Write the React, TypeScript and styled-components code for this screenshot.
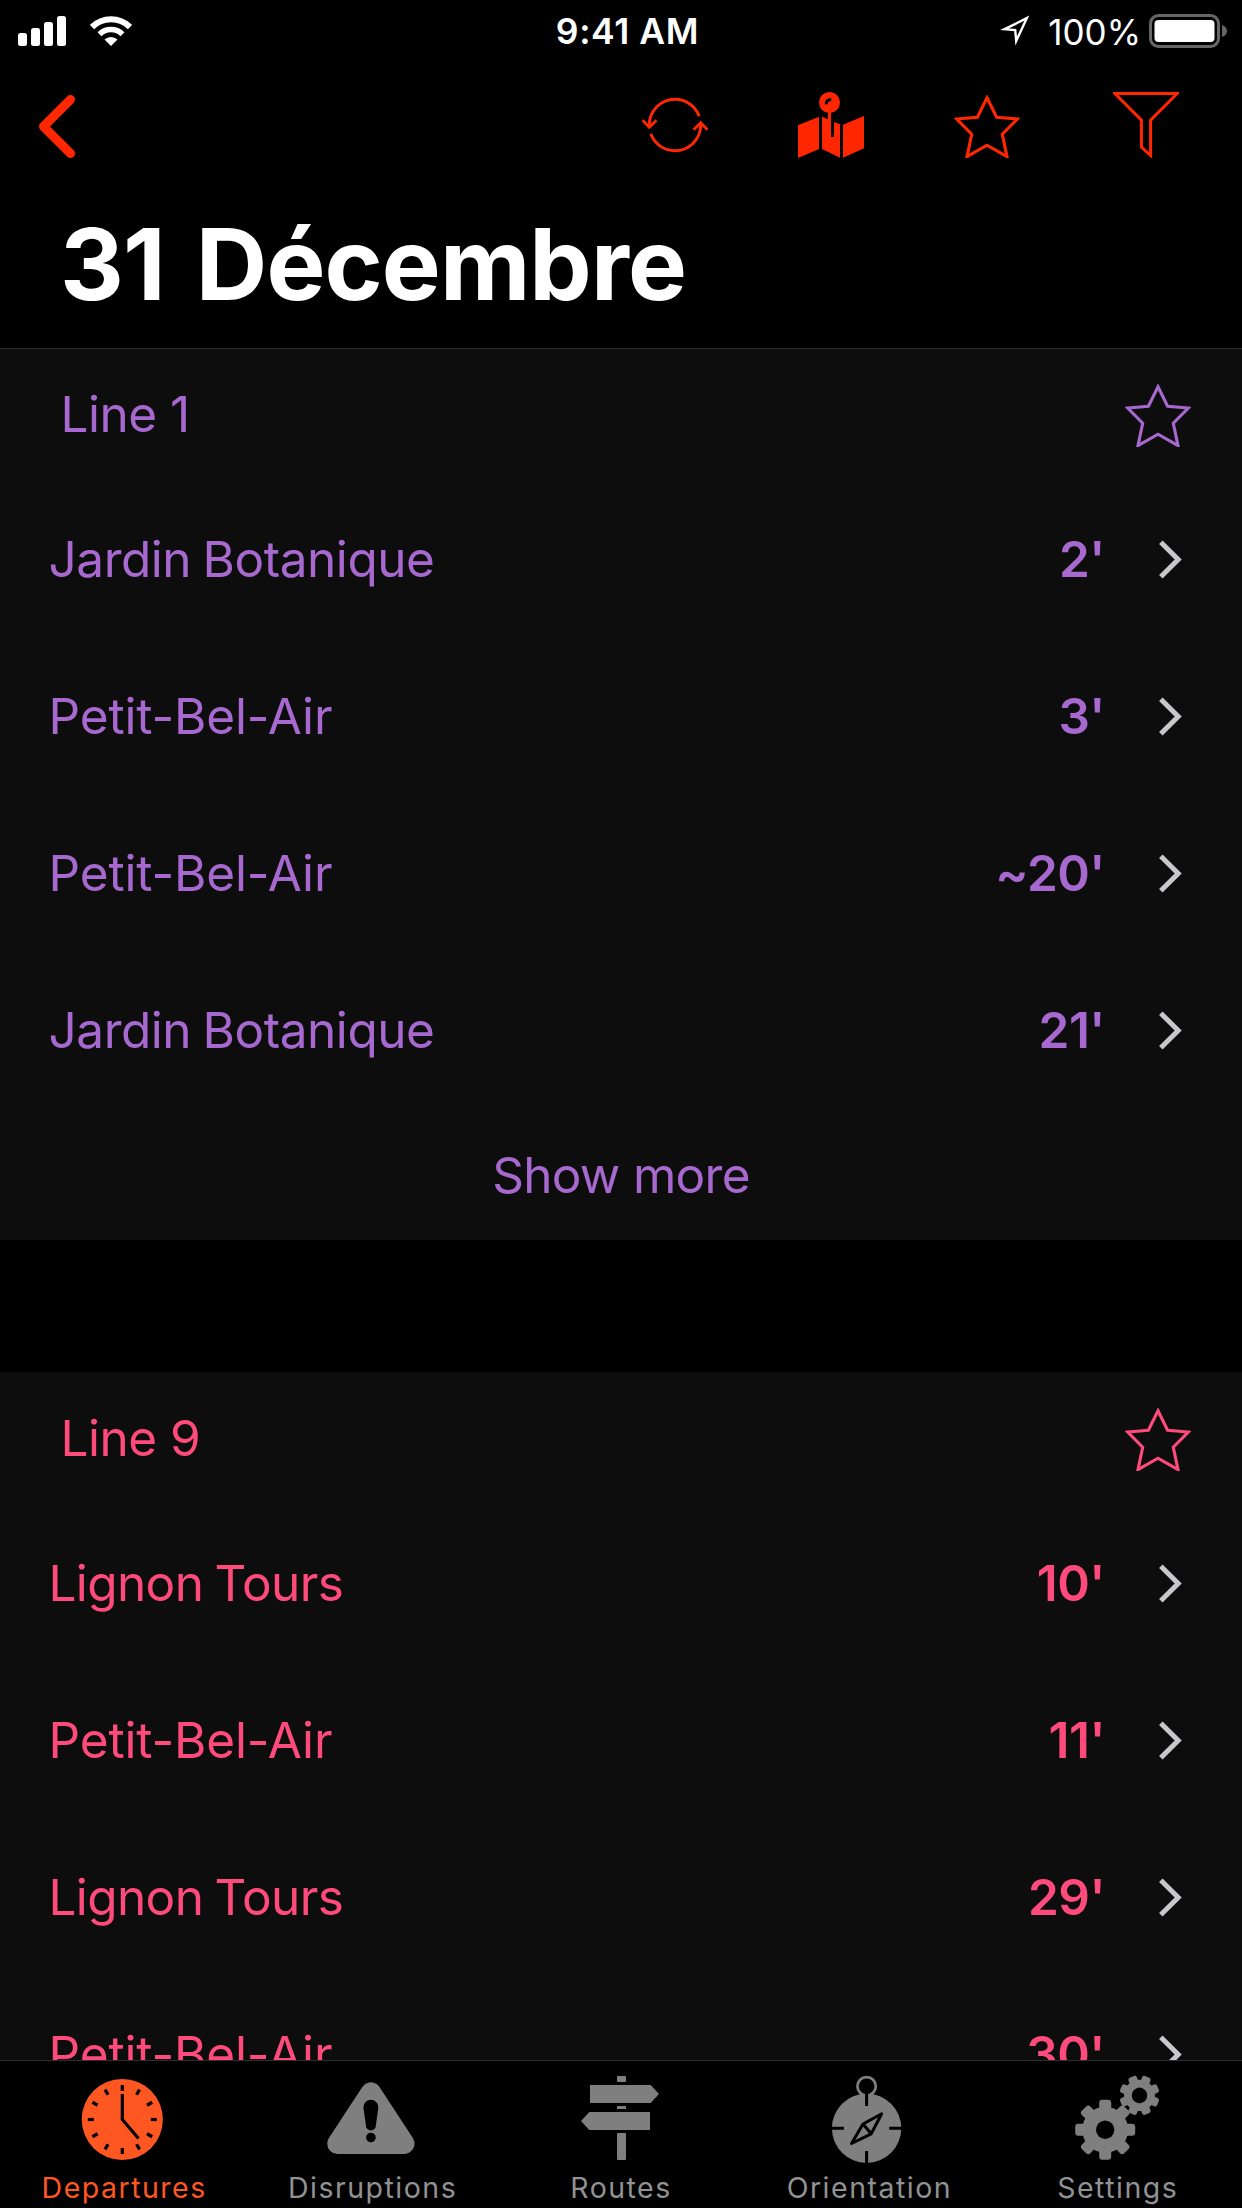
import React from "react";
import styled, { createGlobalStyle } from "styled-components";

const PURPLE = "#a769cf";
const PINK = "#ff4a7c";
const RED = "#ff2600";
const ORANGE = "#ff5722";

const GlobalStyle = createGlobalStyle`
  body { margin: 0; background: #000; }
  * { box-sizing: border-box; }
  svg { display: block; flex: none; }
`;

const Screen = styled.div`
  width: 1242px;
  height: 2208px;
  display: flex;
  flex-direction: column;
  overflow: hidden;
  background: #000;
  color: #fff;
  font-family: Inter, "Liberation Sans", sans-serif;
  white-space: nowrap;
`;

const Header = styled.header`
  position: relative;
  flex: none;
  height: 348px;
  background: #000;
  box-shadow: 0 1px 0 #2e2e2e;
`;

const StatusBar = styled.div`
  height: 60px;
  display: grid;
  grid-template-columns: 1fr auto 1fr;
  align-items: center;
  padding: 0 14px 0 18px;
`;

const StatusGroup = styled.div<{ $end?: boolean }>`
  display: flex;
  align-items: center;
  justify-content: ${(p) => (p.$end ? "flex-end" : "flex-start")};
  gap: ${(p) => (p.$end ? "0" : "24px")};
`;

const Clock = styled.div`
  font-size: 35.5px;
  font-weight: 600;
  line-height: 60px;
  letter-spacing: 0.6px;
  padding: 2px 0 0 9px;
`;

const Battery = styled.span`
  font-size: 35px;
  line-height: 60px;
  padding-top: 1px;
  margin: 0 8px 0 18px;
`;

const NavBar = styled.nav`
  height: 120px;
  display: flex;
  align-items: flex-start;
  padding: 32px 63px 0 38px;
`;

const NavActions = styled.div`
  margin-left: auto;
  display: flex;
  align-items: flex-end;
  height: 66px;
  gap: 90px;

  & > :last-child { margin-left: 3px; }
`;

const Title = styled.h1`
  margin: 24px 0 0;
  padding-left: 60px;
  font-size: 99px;
  line-height: 120px;
  font-weight: 700;
  letter-spacing: -0.9px;
  word-spacing: 8.5px;
`;

const List = styled.main`
  flex: 1;
  min-height: 0;
  overflow: hidden;
  display: flex;
  flex-direction: column;
  gap: 132px;
`;

const Section = styled.section<{ $color: string }>`
  flex: none;
  background: #0d0d0d;
  color: ${(p) => p.$color};
  font-size: 49.5px;
`;

const SectionHead = styled.div`
  height: 132px;
  display: flex;
  align-items: center;
  justify-content: space-between;
  padding: 3px 51px 0 60.5px;
`;

const LineName = styled.span`
  padding-bottom: 4px;
  letter-spacing: -0.5px;
`;

const Row = styled.div`
  height: 157px;
  display: flex;
  align-items: center;
  padding: 0 59px 0 48.5px;
`;

const Destination = styled.span<{ $tracking: number }>`
  flex: 1;
  letter-spacing: ${(p) => p.$tracking}px;
  word-spacing: -2px;
`;

const Minutes = styled.span`
  font-weight: 600;
  letter-spacing: -0.5px;
  margin-right: 54px;
`;

const ShowMore = styled.div`
  height: 132px;
  display: flex;
  align-items: center;
  justify-content: center;
  padding-top: 1px;
  letter-spacing: -0.7px;
`;

const TabBar = styled.footer`
  flex: none;
  height: 148px;
  display: grid;
  grid-template-columns: repeat(5, 1fr);
  border-top: 1px solid #2e2e2e;
  background: #000;
`;

const Tab = styled.div<{ $active?: boolean }>`
  display: flex;
  flex-direction: column;
  align-items: center;
  padding-top: 11px;
  color: ${(p) => (p.$active ? ORANGE : "#7f7f7f")};
`;

const TabLabel = styled.span<{ $active?: boolean }>`
  font-size: 28.5px;
  line-height: 36px;
  margin-top: 6px;
  letter-spacing: 1.5px;
  color: ${(p) => (p.$active ? ORANGE : "#929292")};
`;

const Signal = () => (
  <svg width="48" height="30" fill="#fff">
    <rect x="0" y="17" width="9" height="13" rx="2.5" />
    <rect x="13" y="12" width="9" height="18" rx="2.5" />
    <rect x="26" y="6" width="9" height="24" rx="2.5" />
    <rect x="39" y="0" width="9" height="30" rx="2.5" />
  </svg>
);

const Wifi = () => (
  <svg width="42" height="30" fill="none" stroke="#fff">
    <path d="M2 11 A27 27 0 0 1 40 11" strokeWidth="6" />
    <path d="M9.5 18.2 A16.5 16.5 0 0 1 32.5 18.2" strokeWidth="5.6" />
    <path d="M14.5 23.5 A9.4 9.4 0 0 1 27.5 23.5 L21 30 Z" fill="#fff" stroke="none" />
  </svg>
);

const LocationArrow = () => (
  <svg width="30" height="32" viewBox="0 0 30 32" fill="none" stroke="#fff" strokeWidth="2.4">
    <path d="M26.8 3.2 L4.5 14.2 L15.2 15 L16.2 26 Z" />
  </svg>
);

const BatteryIcon = () => (
  <svg width="79" height="34" viewBox="0 0 79 34">
    <rect x="1.5" y="1.5" width="68" height="31" rx="8" fill="none" stroke="#666" strokeWidth="3" />
    <rect x="5.5" y="6" width="60" height="22" rx="4" fill="#fff" />
    <path d="M73 11 Q78 13 78 17 Q78 21 73 23 Z" fill="#666" />
  </svg>
);

const Back = () => (
  <svg width="38" height="66" viewBox="0 0 38 66" fill="none" stroke={RED} strokeWidth="9" strokeLinecap="round" strokeLinejoin="round">
    <path d="M32.5 7.5 L5.5 34.5 L32.5 61.5" />
  </svg>
);

const Refresh = () => (
  <svg width="66" height="66" viewBox="0 0 66 66" fill="none" stroke={RED} strokeWidth="2.9">
    <path d="M57.2 24.3 A25.7 25.7 0 0 0 33 7.3 A25.7 25.7 0 0 0 7.3 33 V35" />
    <path d="M0.5 28.2 L7.3 35.2 L14.5 28.2" />
    <path d="M8.8 41.8 A25.7 25.7 0 0 0 33 58.7 A25.7 25.7 0 0 0 58.7 33 V31" />
    <path d="M51.5 37.8 L58.7 30.8 L65.5 37.8" />
  </svg>
);

const MapPin = () => (
  <svg width="66" height="66" viewBox="0 0 66 66" fill={RED}>
    <path d="M0 33.3 L21 24.7 V57 L0 66 Z" />
    <path d="M24 24.7 L30 27.3 V20 H33 V45 H36 V30 L42 32.3 V65.7 L24 57 Z" />
    <path d="M45 32.7 L66 24 V56.3 L45 65.7 Z" />
    <circle cx="31.5" cy="10.5" r="10.5" />
    <path d="M28.2 12.2 Q28.2 7.6 33.2 7.6" fill="none" stroke="#000" strokeWidth="3" />
  </svg>
);

const Star = ({ color }: { color: string }) => (
  <svg width="66" height="63" viewBox="0 0 66 63" fill="none" stroke={color} strokeWidth="3.1">
    <path d="M33 2.8 L42.6 22.2 L63.3 24 L48.3 39.2 L53 61.6 L33 50.2 L13 61.6 L17.7 39.2 L2.7 24 L23.4 22.2 Z" />
  </svg>
);

const Funnel = () => (
  <svg width="66" height="66" viewBox="0 0 66 66" fill="none" stroke={RED} strokeWidth="3">
    <path d="M1.8 1.5 H64.2 L37.6 28.2 V63.5 L28.4 55.2 V28.2 Z" />
  </svg>
);

const Chevron = () => (
  <svg width="24" height="40" viewBox="0 0 24 40" fill="none" stroke="#c7c7cc" strokeWidth="5">
    <path d="M1.8 3.3 L19.2 20.5 L1.8 37.7" />
  </svg>
);

const ClockIcon = () => (
  <svg width="100" height="92" viewBox="0 0 100 92">
    <circle cx="48.3" cy="47.5" r="40.6" fill="currentColor" />
    <g stroke="#000" strokeWidth="3.2">
      {Array.from({ length: 12 }, (_, i) => (
        <path key={i} d="M48.3 13 V19" transform={`rotate(${i * 30} 48.3 47.5)`} />
      ))}
      <path d="M48.3 22 V47.5 L64.5 66.5" fill="none" />
    </g>
  </svg>
);

const Warning = () => (
  <svg width="100" height="92" viewBox="0 0 100 92">
    <path d="M47.9 20.5 L81.3 71.7 H14.5 Z" fill="currentColor" stroke="currentColor" strokeWidth="20.5" strokeLinejoin="round" />
    <path d="M40.4 35.2 A7.5 7.5 0 0 1 55.4 35.2 L52.8 54 A4.9 4.4 0 0 1 43 54 Z" fill="#000" />
    <circle cx="47.9" cy="65.5" r="4.8" fill="#000" />
  </svg>
);

const Signpost = () => (
  <svg width="100" height="92" viewBox="0 0 100 92" fill="currentColor">
    <rect x="46" y="4" width="9" height="6" rx="1" />
    <path d="M19 13 H79.7 L88 22 L79.7 31 H19 Z" />
    <rect x="46" y="34" width="9" height="3" />
    <path d="M79 40 H18.3 L10 49 L18.3 58 H79 Z" />
    <rect x="46" y="61" width="9" height="27" rx="1" />
  </svg>
);

const Compass = () => (
  <svg width="100" height="92" viewBox="0 0 100 92" fill="none">
    <circle cx="47.6" cy="56.3" r="34.7" fill="currentColor" />
    <circle cx="47.6" cy="14.3" r="9.2" fill="#000" stroke="currentColor" strokeWidth="2.7" />
    <g stroke="#000" strokeWidth="3">
      <path d="M47.6 21 V34 M47.6 79 V92 M12 56.3 H24.9 M70.2 56.3 H83" />
      <path d="M62.7 41.8 L44 52 L32.5 71.5 L52.2 61.8 Z M44 52 L52.2 61.8" strokeLinejoin="round" />
    </g>
  </svg>
);

const Gear = ({ cx, cy, outer, body, hole, tooth, turn }: {
  cx: number; cy: number; outer: number; body: number; hole: number; tooth: number; turn: number;
}) => (
  <g transform={`translate(${cx} ${cy}) rotate(${turn})`}>
    <circle r={body} fill="currentColor" />
    {Array.from({ length: 8 }, (_, i) => (
      <rect key={i} x={-tooth / 2} y={-outer} width={tooth} height={outer - body + 4} rx={tooth / 4}
        fill="currentColor" transform={`rotate(${i * 45})`} />
    ))}
    <circle r={hole} fill="#000" />
  </g>
);

const Gears = () => (
  <svg width="100" height="92" viewBox="0 0 100 92">
    <Gear cx={71.5} cy={23.4} outer={20} body={15.5} hole={7.8} tooth={9} turn={22.5} />
    <Gear cx={37.2} cy={57.8} outer={30} body={23} hole={9.2} tooth={12} turn={0} />
  </svg>
);

type Departure = { to: string; wait: string; tracking: number };

const lines: { name: string; color: string; more?: boolean; departures: Departure[] }[] = [
  {
    name: "Line 1",
    color: PURPLE,
    more: true,
    departures: [
      { to: "Jardin Botanique", wait: "2'", tracking: -0.46 },
      { to: "Petit-Bel-Air", wait: "3'", tracking: -0.14 },
      { to: "Petit-Bel-Air", wait: "~20'", tracking: -0.14 },
      { to: "Jardin Botanique", wait: "21'", tracking: -0.46 },
    ],
  },
  {
    name: "Line 9",
    color: PINK,
    departures: [
      { to: "Lignon Tours", wait: "10'", tracking: -0.62 },
      { to: "Petit-Bel-Air", wait: "11'", tracking: -0.14 },
      { to: "Lignon Tours", wait: "29'", tracking: -0.62 },
      { to: "Petit-Bel-Air", wait: "30'", tracking: -0.14 },
    ],
  },
];

const tabs = [
  { label: "Departures", Icon: ClockIcon, active: true },
  { label: "Disruptions", Icon: Warning },
  { label: "Routes", Icon: Signpost },
  { label: "Orientation", Icon: Compass },
  { label: "Settings", Icon: Gears },
];

export default function App() {
  return (
    <Screen>
      <GlobalStyle />
      <Header>
        <StatusBar>
          <StatusGroup><Signal /><Wifi /></StatusGroup>
          <Clock>9:41 AM</Clock>
          <StatusGroup $end><LocationArrow /><Battery>100%</Battery><BatteryIcon /></StatusGroup>
        </StatusBar>
        <NavBar>
          <Back />
          <NavActions><Refresh /><MapPin /><Star color={RED} /><Funnel /></NavActions>
        </NavBar>
        <Title>31 Décembre</Title>
      </Header>
      <List>
        {lines.map((line) => (
          <Section key={line.name} $color={line.color}>
            <SectionHead><LineName>{line.name}</LineName><Star color={line.color} /></SectionHead>
            {line.departures.map((d, i) => (
              <Row key={i}>
                <Destination $tracking={d.tracking}>{d.to}</Destination>
                <Minutes>{d.wait}</Minutes>
                <Chevron />
              </Row>
            ))}
            {line.more && <ShowMore>Show more</ShowMore>}
          </Section>
        ))}
      </List>
      <TabBar>
        {tabs.map(({ label, Icon, active }) => (
          <Tab key={label} $active={active}>
            <Icon />
            <TabLabel $active={active}>{label}</TabLabel>
          </Tab>
        ))}
      </TabBar>
    </Screen>
  );
}
